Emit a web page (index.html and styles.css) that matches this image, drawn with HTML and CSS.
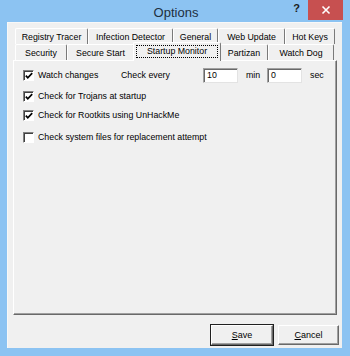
FILE: index.html
```html
<!DOCTYPE html>
<html>
<head>
<meta charset="utf-8">
<link rel="stylesheet" href="styles.css">
</head>
<body>
<div class="window">
  <div class="titlebar">
    <div></div>
    <div class="title">Options</div>
    <div class="controls">
      <span class="help">?</span>
      <span class="close"><svg width="10" height="10" viewBox="0 0 10 10"><path d="M1.5 1.5 L8.5 8.5 M8.5 1.5 L1.5 8.5" stroke="#fff" stroke-width="1.6" fill="none"/></svg></span>
    </div>
  </div>
  <div class="client">
    <div class="tabs">
      <div class="tabrow row-back">
        <div class="tab">Registry Tracer</div>
        <div class="tab">Infection Detector</div>
        <div class="tab">General</div>
        <div class="tab">Web Update</div>
        <div class="tab">Hot Keys</div>
      </div>
      <div class="tabrow row-front">
        <div class="tab">Security</div>
        <div class="tab">Secure Start</div>
        <div class="tab selected"><span class="focus">Startup Monitor</span></div>
        <div class="tab">Partizan</div>
        <div class="tab">Watch Dog</div>
      </div>
    </div>
    <div class="panel">
      <div class="row first">
        <label class="check wide"><span class="box checked"><svg width="8" height="8" viewBox="0 0 8 8"><path d="M0.8 3.6 L2.8 5.8 L7.2 1.2" stroke="#000" stroke-width="1.7" fill="none"/></svg></span>Watch changes</label>
        <span class="every">Check every</span>
        <span class="field">10</span>
        <span class="unit">min</span>
        <span class="field">0</span>
        <span class="unit">sec</span>
      </div>
      <div class="row second">
        <label class="check"><span class="box checked"><svg width="8" height="8" viewBox="0 0 8 8"><path d="M0.8 3.6 L2.8 5.8 L7.2 1.2" stroke="#000" stroke-width="1.7" fill="none"/></svg></span>Check for Trojans at startup</label>
      </div>
      <div class="row third">
        <label class="check"><span class="box checked"><svg width="8" height="8" viewBox="0 0 8 8"><path d="M0.8 3.6 L2.8 5.8 L7.2 1.2" stroke="#000" stroke-width="1.7" fill="none"/></svg></span>Check for Rootkits using UnHackMe</label>
      </div>
      <div class="row fourth">
        <label class="check"><span class="box"></span>Check system files for replacement attempt</label>
      </div>
    </div>
    <div class="buttons">
      <button class="btn default"><u>S</u>ave</button>
      <button class="btn"><u>C</u>ancel</button>
    </div>
  </div>
</div>
</body>
</html>
```
FILE: styles.css
```css
html, body {
  margin: 0;
  padding: 0;
}
body {
  font-family: "Liberation Sans", Arial, sans-serif;
  font-size: 8.8px;
  color: #000;
}
.window {
  width: 350px;
  height: 356px;
  background: #8cc3f2;
  display: flex;
  flex-direction: column;
}
.titlebar {
  height: 22px;
  display: grid;
  grid-template-columns: 1fr auto 1fr;
  align-items: start;
}
.title {
  font-size: 13px;
  color: #1e2f40;
  line-height: 14px;
  padding-top: 6px;
  padding-left: 2px;
}
.controls {
  display: flex;
  justify-content: flex-end;
  align-items: flex-start;
  padding-right: 7px;
}
.help {
  font-weight: bold;
  font-size: 11px;
  color: #1a1a1a;
  line-height: 11px;
  padding-top: 3px;
  margin-right: 8px;
}
.close {
  width: 35px;
  height: 20px;
  background: #c75050;
  display: flex;
  align-items: center;
  justify-content: center;
}
.client {
  flex: 1;
  margin: 0 8px 8px 7px;
  background: #f0f0f0;
  border-left: 1px solid #f8f8f8;
  border-top: 1px solid #f8f8f8;
  display: flex;
  flex-direction: column;
}
.tabs {
  margin: 5px 0 0 7px;
  width: 320px;
}
.tabrow {
  display: grid;
  height: 16px;
}
.row-back {
  grid-template-columns: 73px 85px 45px 67px 50px;
}
.row-front {
  grid-template-columns: 52px 67px 86px 48px 66px;
}
.tab {
  box-sizing: border-box;
  border-left: 1px solid #ffffff;
  border-top: 1px solid #ffffff;
  border-right: 1px solid #7a7a7a;
  border-top-right-radius: 2px;
  border-top-left-radius: 2px;
  text-align: center;
  line-height: 14px;
  white-space: nowrap;
  padding-top: 1px;
}
.tab.selected {
  margin: -2px -1px 0 -1px;
  height: 19px;
  background: #f0f0f0;
  position: relative;
  z-index: 1;
  padding: 2px 2px 0 2px;
}
.focus {
  display: block;
  border: 1px dotted #000;
  line-height: 10px;
  padding-bottom: 1px;
}
.panel {
  margin-left: 5px;
  width: 324px;
  height: 255px;
  box-sizing: border-box;
  border-left: 1px solid #ffffff;
  border-top: 1px solid #ffffff;
  border-right: 1px solid #696969;
  border-bottom: 1px solid #696969;
  box-shadow: inset -1px -1px 0 #a0a0a0;
  padding-left: 9px;
}
.row {
  display: flex;
  align-items: center;
  height: 16px;
}
.row.first { margin-top: 6px; }
.row.second { margin-top: 5px; }
.row.third { margin-top: 3px; }
.row.fourth { margin-top: 6px; }
.check {
  display: flex;
  align-items: center;
  white-space: nowrap;
}
.check.wide { width: 98px; }
.box {
  width: 11px;
  height: 11px;
  box-sizing: border-box;
  background: #fff;
  border-top: 1px solid #808080;
  border-left: 1px solid #808080;
  border-right: 1px solid #ffffff;
  border-bottom: 1px solid #ffffff;
  box-shadow: inset 1px 1px 0 #404040;
  display: flex;
  align-items: center;
  justify-content: center;
  margin-right: 4px;
  padding: 1px 0 0 1px;
}
.every { width: 82px; }
.field {
  width: 35px;
  height: 15px;
  box-sizing: border-box;
  background: #fff;
  border-top: 1px solid #a0a0a0;
  border-left: 1px solid #a0a0a0;
  border-right: 1px solid #e3e3e3;
  border-bottom: 1px solid #e3e3e3;
  box-shadow: inset 1px 1px 0 #696969;
  padding-left: 3px;
  line-height: 13px;
}
.unit {
  margin-left: 8px;
  width: 21px;
}
.buttons {
  display: flex;
  justify-content: flex-end;
  gap: 5px;
  margin-top: 10px;
  padding-right: 3px;
}
.btn {
  font-family: "Liberation Sans", Arial, sans-serif;
  font-size: 9px;
  color: #000;
  background: #f0f0f0;
  height: 20px;
  width: 61px;
  padding: 0;
  margin: 0;
  border-top: 1px solid #ffffff;
  border-left: 1px solid #ffffff;
  border-right: 1px solid #696969;
  border-bottom: 1px solid #696969;
  box-shadow: inset -1px -1px 0 #a0a0a0;
}
.btn.default {
  width: 62px;
  outline: 1px solid #202020;
}
u { text-decoration: underline; }
```
